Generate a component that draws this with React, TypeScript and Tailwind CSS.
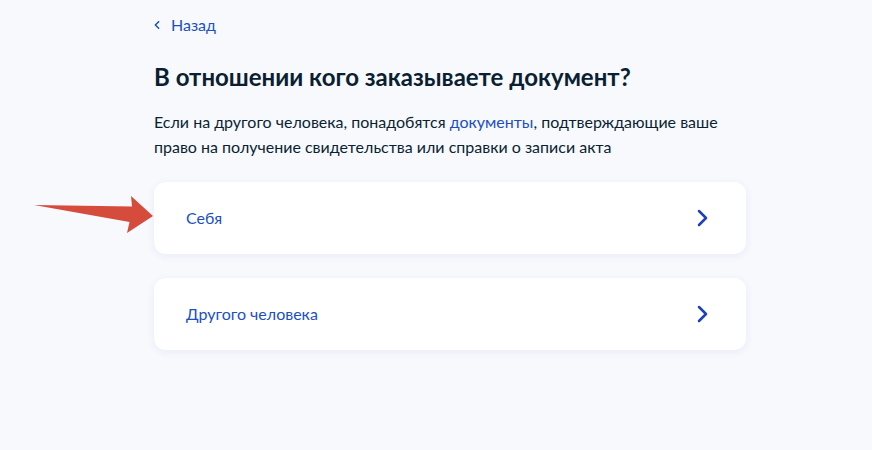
import React from "react";

const font = { fontFamily: "Lato, 'Noto Sans', Arial, sans-serif" };

function Chevron({ dir = "right", className = "" }: { dir?: "left" | "right"; className?: string }) {
  return (
    <svg width="24" height="24" viewBox="0 0 24 24" fill="none" className={className}>
      {dir === "right" ? (
        <path d="M9 5l7 7-7 7" stroke="currentColor" strokeWidth="2.5" strokeLinecap="round" strokeLinejoin="round" />
      ) : (
        <path d="M14 8l-4 4 4 4" stroke="currentColor" strokeWidth="1.8" strokeLinecap="round" strokeLinejoin="round" />
      )}
    </svg>
  );
}

function Option({ label }: { label: string }) {
  return (
    <button className="flex h-[72px] w-full items-center justify-between rounded-xl bg-white pl-8 pr-8 text-left shadow-[0_2px_8px_rgba(30,60,140,0.07)]">
      <span className="text-[16px] leading-6 text-[#1b4fc4]">{label}</span>
      <Chevron className="text-[#1d3fb8]" />
    </button>
  );
}

export default function App() {
  return (
    <div className="relative min-h-[450px] w-full bg-[#f7f9fd]" style={font}>
      <div className="ml-[154px] w-[592px] pt-[13px]">
        <a className="flex h-6 items-center gap-1 text-[16px] leading-6 text-[#1b4fc4]">
          <Chevron dir="left" className="-ml-[7px] h-5 w-5" />
          <span>Назад</span>
        </a>
        <h1 className="mt-6 text-[24px] font-bold leading-8 text-[#0b1f33]">
          В отношении кого заказываете документ?
        </h1>
        <p className="mt-4 text-[16px] leading-[25px] text-[#0b1f33]">
          Если на другого человека, понадобятся <span className="text-[#1b4fc4]">документы</span>, подтверждающие ваше право на получение свидетельства или справки о записи акта
        </p>
        <div className="mt-[23px] flex flex-col gap-6">
          <Option label="Себя" />
          <Option label="Другого человека" />
        </div>
      </div>

      {/* pointer arrow */}
      <svg className="absolute left-0 top-0" width="160" height="240" viewBox="0 0 160 240">
        <polygon points="34,205 132,206.5 131,196 153,216 127,233 129.5,222" fill="#d64c3c" />
      </svg>
    </div>
  );
}
